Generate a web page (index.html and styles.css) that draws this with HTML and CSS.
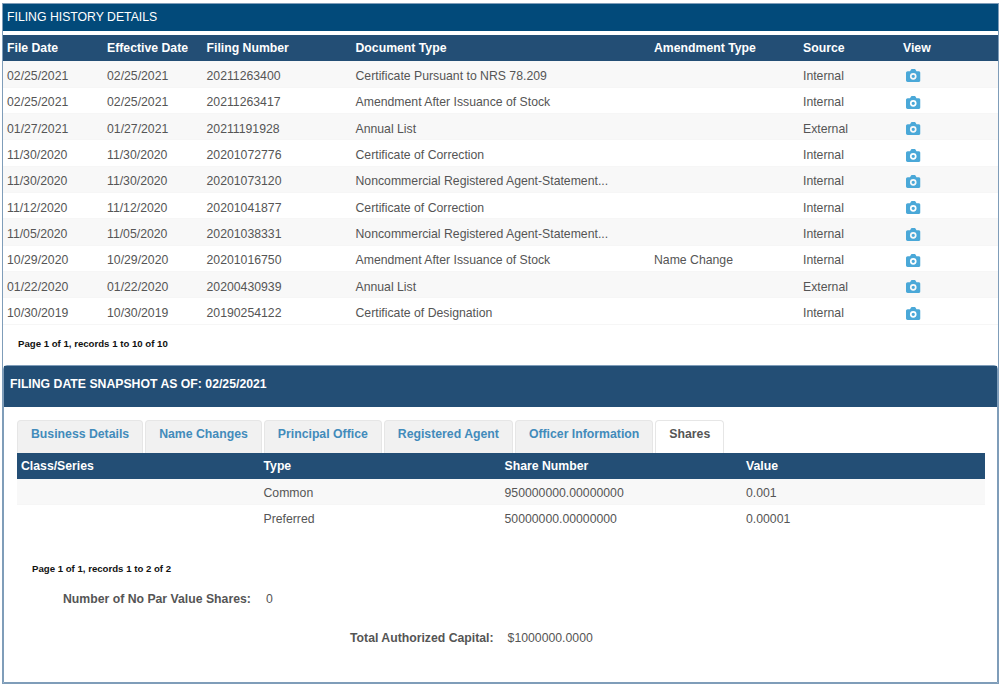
FILE: index.html
```html
<!DOCTYPE html>
<html lang="en">
<head>
<meta charset="utf-8">
<title>Filing History Details</title>
<link rel="stylesheet" href="styles.css">
</head>
<body>
<svg class="sprite" width="0" height="0" aria-hidden="true">
  <symbol id="cam" viewBox="0 0 14 12" preserveAspectRatio="none">
    <path fill-rule="evenodd" d="M1.6 2H3.9L4.7.6C4.9.2 5.2 0 5.6 0H8.4C8.8 0 9.1.2 9.3.6L10.1 2H12.4C13.3 2 14 2.7 14 3.6V10.4C14 11.3 13.3 12 12.4 12H1.6C.7 12 0 11.3 0 10.4V3.6C0 2.7.7 2 1.6 2ZM7 3.6A3.2 3.2 0 1 0 7 10 3.2 3.2 0 1 0 7 3.6ZM7 5.2A1.6 1.6 0 1 1 7 8.4 1.6 1.6 0 1 1 7 5.2Z"/>
  </symbol>
</svg>
<main class="frame">
  <h2 class="title">FILING HISTORY DETAILS</h2>
  <table class="grid history">
    <colgroup><col class="c100"><col class="c99"><col class="c149"><col class="c299"><col class="c149"><col class="c100"><col></colgroup>
    <thead><tr><th>File Date</th><th>Effective Date</th><th>Filing Number</th><th>Document Type</th><th>Amendment Type</th><th>Source</th><th>View</th></tr></thead>
    <tbody>
      <tr><td>02/25/2021</td><td>02/25/2021</td><td>20211263400</td><td>Certificate Pursuant to NRS 78.209</td><td></td><td>Internal</td><td class="view"><svg class="cam"><use href="#cam"/></svg></td></tr>
      <tr><td>02/25/2021</td><td>02/25/2021</td><td>20211263417</td><td>Amendment After Issuance of Stock</td><td></td><td>Internal</td><td class="view"><svg class="cam"><use href="#cam"/></svg></td></tr>
      <tr><td>01/27/2021</td><td>01/27/2021</td><td>20211191928</td><td>Annual List</td><td></td><td>External</td><td class="view"><svg class="cam"><use href="#cam"/></svg></td></tr>
      <tr><td>11/30/2020</td><td>11/30/2020</td><td>20201072776</td><td>Certificate of Correction</td><td></td><td>Internal</td><td class="view"><svg class="cam"><use href="#cam"/></svg></td></tr>
      <tr><td>11/30/2020</td><td>11/30/2020</td><td>20201073120</td><td>Noncommercial Registered Agent-Statement...</td><td></td><td>Internal</td><td class="view"><svg class="cam"><use href="#cam"/></svg></td></tr>
      <tr><td>11/12/2020</td><td>11/12/2020</td><td>20201041877</td><td>Certificate of Correction</td><td></td><td>Internal</td><td class="view"><svg class="cam"><use href="#cam"/></svg></td></tr>
      <tr><td>11/05/2020</td><td>11/05/2020</td><td>20201038331</td><td>Noncommercial Registered Agent-Statement...</td><td></td><td>Internal</td><td class="view"><svg class="cam"><use href="#cam"/></svg></td></tr>
      <tr><td>10/29/2020</td><td>10/29/2020</td><td>20201016750</td><td>Amendment After Issuance of Stock</td><td>Name Change</td><td>Internal</td><td class="view"><svg class="cam"><use href="#cam"/></svg></td></tr>
      <tr><td>01/22/2020</td><td>01/22/2020</td><td>20200430939</td><td>Annual List</td><td></td><td>External</td><td class="view"><svg class="cam"><use href="#cam"/></svg></td></tr>
      <tr><td>10/30/2019</td><td>10/30/2019</td><td>20190254122</td><td>Certificate of Designation</td><td></td><td>Internal</td><td class="view"><svg class="cam"><use href="#cam"/></svg></td></tr>
    </tbody>
  </table>
  <p class="pager pager-history">Page 1 of 1, records 1 to 10 of 10</p>

  <section class="panel">
    <h3 class="panel-head">FILING DATE SNAPSHOT AS OF: 02/25/2021</h3>
    <div class="panel-body">
      <ul class="tabs">
        <li class="tab">Business Details</li>
        <li class="tab">Name Changes</li>
        <li class="tab">Principal Office</li>
        <li class="tab">Registered Agent</li>
        <li class="tab">Officer Information</li>
        <li class="tab active">Shares</li>
      </ul>
      <table class="grid shares">
        <colgroup><col class="c243"><col class="c241"><col class="c242"><col></colgroup>
        <thead><tr><th>Class/Series</th><th>Type</th><th>Share Number</th><th>Value</th></tr></thead>
        <tbody>
          <tr><td></td><td>Common</td><td>950000000.00000000</td><td>0.001</td></tr>
          <tr><td></td><td>Preferred</td><td>50000000.00000000</td><td>0.00001</td></tr>
        </tbody>
      </table>
      <p class="pager pager-shares">Page 1 of 1, records 1 to 2 of 2</p>
      <div class="field field-par"><span class="label">Number of No Par Value Shares:</span><span class="value">0</span></div>
      <div class="field field-capital"><span class="label">Total Authorized Capital:</span><span class="value">$1000000.0000</span></div>
    </div>
  </section>
</main>
</body>
</html>
```

FILE: styles.css
```css
* { box-sizing: border-box; }
html, body { margin: 0; padding: 0; background: #fff; }
body {
  font-family: "Liberation Sans", Arial, sans-serif;
  font-size: 12.25px;
  color: #555;
}
.sprite { position: absolute; }
.frame {
  display: flex;
  flex-direction: column;
  width: 997px;
  height: 681px;
  margin: 3px 0 0 2px;
  border: 1px solid #7f9db9;
  overflow: hidden;
}
.title {
  margin: 0;
  height: 27px;
  line-height: 26px;
  padding-left: 4px;
  background: #024a7a;
  color: #fff;
  font-size: 12.25px;
  font-weight: normal;
}
.grid {
  width: 100%;
  border-collapse: collapse;
  table-layout: fixed;
}
.history { margin-top: 4px; }
.c99 { width: 99.5px; }
.c100 { width: 100px; }
.c149 { width: 149px; }
.c299 { width: 298.5px; }
.c243 { width: 242.5px; }
.c241 { width: 241px; }
.c242 { width: 241.5px; }
.grid th {
  height: 26px;
  padding: 0 0 0 4px;
  background: #234e75;
  color: #fff;
  font-weight: bold;
  text-align: left;
}
.grid td {
  height: 26.33px;
  padding: 3.5px 0 0 4px;
  border-bottom: 1px solid #f6f6f6;
}
.grid tbody tr:nth-child(odd) td { background: #f8f8f8; }
.shares td { height: 26px; }
.grid.shares td { padding-top: 2.5px; }
.shares tbody tr:last-child td { border-bottom: 0; }
.view { vertical-align: middle; }
.cam {
  display: block;
  width: 14.5px;
  height: 13px;
  margin: 0.5px 0 0 3px;
  fill: #4aa8d8;
}
.pager {
  margin: 0;
  color: #111;
  font-size: 9.65px;
  font-weight: bold;
}
.pager-history { padding: 13px 0 0 15px; height: 40px; flex: none; }
.panel {
  flex: 1;
  border: 1px solid #7f9db9;
  border-radius: 4px 4px 0 0;
}
.panel-head {
  margin: 0;
  height: 41px;
  padding-left: 6px;
  line-height: 36px;
  background: #234e75;
  color: #fff;
  font-size: 12.25px;
  font-weight: bold;
}
.panel-body { padding: 13px 12px 0 13px; }
.tabs {
  display: flex;
  gap: 2px;
  margin: 0;
  padding: 0;
  list-style: none;
}
.tab {
  height: 33px;
  padding: 0 13px;
  font-size: 12.27px;
  line-height: 27px;
  background: #f1f1f1;
  border: 1px solid #e6e6e6;
  border-bottom: 0;
  border-radius: 4px 4px 0 0;
  color: #428bbb;
  font-weight: bold;
}
.tab.active { background: #fff; color: #555; }
.shares th { height: 26px; }
.pager-shares { padding: 32px 0 0 15px; height: 61.67px; }
.field { display: flex; }
.label { font-weight: bold; text-align: right; }
.field-par { padding-left: 46px; gap: 15px; height: 39px; }
.field-capital { padding-left: 333px; gap: 14px; }
```
